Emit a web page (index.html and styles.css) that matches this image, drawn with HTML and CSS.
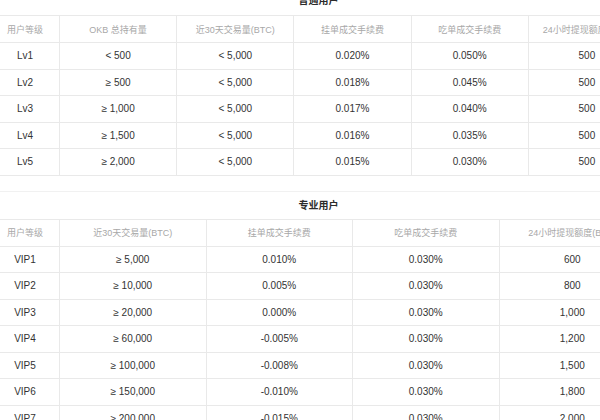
FILE: index.html
```html
<!DOCTYPE html>
<html lang="zh-CN">
<head>
<meta charset="utf-8">
<title>费率等级</title>
<link rel="stylesheet" href="styles.css">
</head>
<body>
<div class="page">
  <section class="section">
    <h3 class="title">普通用户</h3>
    <table class="fees fees-6">
      <thead>
        <tr><th>用户等级</th><th>OKB 总持有量</th><th>近30天交易量(BTC)</th><th>挂单成交手续费</th><th>吃单成交手续费</th><th>24小时提现额度(BTC)</th></tr>
      </thead>
      <tbody>
        <tr><td>Lv1</td><td>&lt; 500</td><td>&lt; 5,000</td><td>0.020%</td><td>0.050%</td><td>500</td></tr>
        <tr><td>Lv2</td><td>≥ 500</td><td>&lt; 5,000</td><td>0.018%</td><td>0.045%</td><td>500</td></tr>
        <tr><td>Lv3</td><td>≥ 1,000</td><td>&lt; 5,000</td><td>0.017%</td><td>0.040%</td><td>500</td></tr>
        <tr><td>Lv4</td><td>≥ 1,500</td><td>&lt; 5,000</td><td>0.016%</td><td>0.035%</td><td>500</td></tr>
        <tr><td>Lv5</td><td>≥ 2,000</td><td>&lt; 5,000</td><td>0.015%</td><td>0.030%</td><td>500</td></tr>
      </tbody>
    </table>
  </section>
  <section class="section section-sep">
    <h3 class="title">专业用户</h3>
    <table class="fees fees-5">
      <thead>
        <tr><th>用户等级</th><th>近30天交易量(BTC)</th><th>挂单成交手续费</th><th>吃单成交手续费</th><th>24小时提现额度(BTC)</th></tr>
      </thead>
      <tbody>
        <tr><td>VIP1</td><td>≥ 5,000</td><td>0.010%</td><td>0.030%</td><td>600</td></tr>
        <tr><td>VIP2</td><td>≥ 10,000</td><td>0.005%</td><td>0.030%</td><td>800</td></tr>
        <tr><td>VIP3</td><td>≥ 20,000</td><td>0.000%</td><td>0.030%</td><td>1,000</td></tr>
        <tr><td>VIP4</td><td>≥ 60,000</td><td>-0.005%</td><td>0.030%</td><td>1,200</td></tr>
        <tr><td>VIP5</td><td>≥ 100,000</td><td>-0.008%</td><td>0.030%</td><td>1,500</td></tr>
        <tr><td>VIP6</td><td>≥ 150,000</td><td>-0.010%</td><td>0.030%</td><td>1,800</td></tr>
        <tr><td>VIP7</td><td>≥ 200,000</td><td>-0.015%</td><td>0.030%</td><td>2,000</td></tr>
      </tbody>
    </table>
  </section>
</div>
</body>
</html>
```

FILE: styles.css
```css
html, body {
  margin: 0;
  padding: 0;
  overflow: hidden;
  background: #ffffff;
}

body {
  font-family: "Liberation Sans", Arial, "Noto Sans CJK SC", sans-serif;
  color: #333333;
  font-size: 10px;
}

/* the view is scrolled slightly into the page */
.page {
  width: 655px;
  margin: -13px 0 0 -9px;
}

.section-sep {
  margin-top: 15px;
  border-top: 1px solid #f1f1f1;
}

.title {
  margin: 0;
  height: 28px;
  line-height: 28px;
  text-align: center;
  font-size: 10px;
  font-weight: bold;
  color: #2b2b2b;
}

.section-sep .title {
  height: 27px;
  line-height: 27px;
}

.fees {
  width: 655px;
  border-collapse: collapse;
  table-layout: fixed;
}

.fees th,
.fees td {
  padding: 0;
  text-align: center;
  border: 1px solid #e9e9e9;
  white-space: nowrap;
  overflow: hidden;
}

.fees th:first-child,
.fees td:first-child {
  border-left: none;
  width: 68px;
}

.fees tr {
  height: 26.5px;
}

.fees thead tr {
  height: 27px;
}

.fees th {
  font-weight: normal;
  font-size: 9px;
  color: #a8a8a8;
}

.fees td {
  font-size: 10px;
  color: #333333;
}
```
